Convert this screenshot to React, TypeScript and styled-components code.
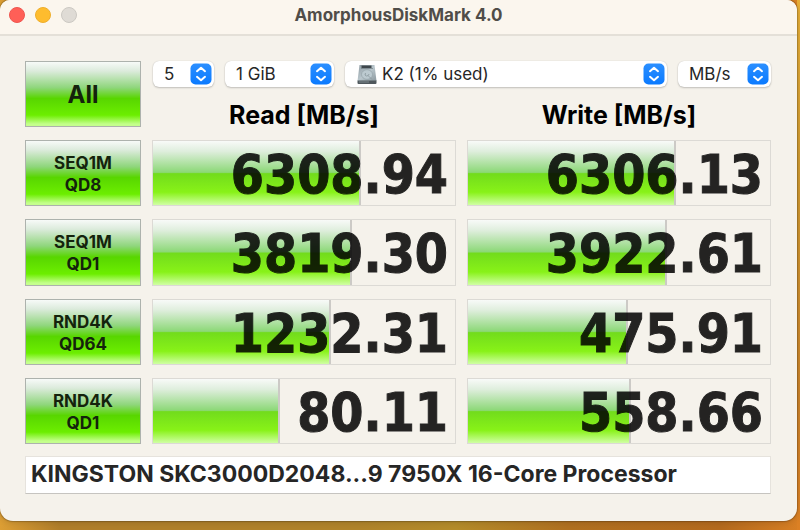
import React from 'react';
import styled, { createGlobalStyle } from 'styled-components';

const GlobalStyle = createGlobalStyle`
  *, *::before, *::after { box-sizing: border-box; }
  body {
    margin: 0;
    font-family: Inter, "Liberation Sans", sans-serif;
    color: #262524;
  }
`;

const Desktop = styled.div`
  display: flex;
  min-height: 100vh;
  padding: 0 3px 9px 0;
  background:
    linear-gradient(#e6ae38 0, #cf9a30 30%, #c9822a 75%, #dc8024 100%) right / 3px 100% no-repeat,
    linear-gradient(90deg, #dc9e34 0, #b07e2a 60px, #b0842a 45%, #b48c2a 57%, #b07020 71%, #b46a1e 90%, #d87f24 100%);
`;

const Window = styled.main`
  flex: 1;
  display: flex;
  flex-direction: column;
  overflow: hidden;
  border-radius: 10px 10px 13px 13px;
  background: #f5f2eb;
  box-shadow: 0 0 1px 1px rgba(0, 0, 0, 0.2), 0 2px 6px rgba(0, 0, 0, 0.12);
`;

const TitleBar = styled.header`
  display: grid;
  grid-template-columns: 1fr auto 1fr;
  align-items: center;
  height: 36px;
  padding: 0 9px 4px;
  border-bottom: 2px solid #e4e0d8;
  background: #fbf6ee;
`;

const Lights = styled.div`
  display: flex;
  gap: 10px;
`;

const Light = styled.button<{ $fill: string; $edge: string }>`
  width: 16px;
  height: 16px;
  padding: 0;
  border: 1px solid ${(p) => p.$edge};
  border-radius: 50%;
  background: ${(p) => p.$fill};
`;

const Title = styled.h1`
  margin: 0;
  font-size: 17px;
  line-height: 20px;
  font-weight: 700;
  color: #504d49;
`;

const Body = styled.div`
  flex: 1;
  display: flex;
  flex-direction: column;
  gap: 12px;
  padding: 25px 26px 27px 25px;
`;

const Board = styled.div`
  flex: 1;
  display: grid;
  grid-template-columns: 116px 1fr 1fr;
  grid-auto-rows: 1fr;
  gap: 13px 11px;
`;

const TestButton = styled.button<{ $large?: boolean }>`
  padding: 2px 0 0;
  border: 1px solid #adb2ad;
  background: linear-gradient(#f7faf8 0%, #dcebdc 14%, #8fd67c 40%, #58d600 57%, #6cee00 83%, #c4ff8c 97%);
  font-family: inherit;
  font-size: ${(p) => (p.$large ? '24px' : '17px')};
  line-height: ${(p) => (p.$large ? '28px' : '22px')};
  font-weight: 700;
  color: #14230c;
`;

const Head = styled.div`
  grid-column: span 2;
  display: flex;
  flex-direction: column;
  justify-content: space-between;
`;

const Pickers = styled.div`
  display: flex;
  gap: 11px;
  padding-left: 1px;
`;

const Picker = styled.label<{ $width?: number }>`
  flex: ${(p) => (p.$width ? `0 0 ${p.$width}px` : '1')};
  display: grid;
  align-items: center;
  height: 26px;
  border-radius: 6px;
  background: #fff;
  box-shadow: 0 0 1px rgba(0, 0, 0, 0.2), 0 1px 2px rgba(0, 0, 0, 0.2);
  & > * { grid-area: 1 / 1; }
`;

const Select = styled.select<{ $inset?: boolean }>`
  appearance: none;
  width: 100%;
  height: 26px;
  padding: 0 28px 0 ${(p) => (p.$inset ? '37px' : '11px')};
  border: 0;
  border-radius: 6px;
  background: transparent;
  font-family: inherit;
  font-size: 17px;
  color: #262626;
`;

const Stepper = styled.svg`
  justify-self: end;
  margin-right: 2px;
  width: 22px;
  height: 22px;
  pointer-events: none;
`;

const Drive = styled.svg`
  margin-left: 12px;
  width: 20px;
  height: 21px;
  pointer-events: none;
`;

const Headings = styled.div`
  display: grid;
  grid-template-columns: 1fr 1fr;
  gap: 11px;
`;

const Heading = styled.h2`
  margin: 0;
  text-align: center;
  font-size: 25px;
  line-height: 24px;
  font-weight: 700;
  color: #000;
`;

const Meter = styled.div`
  display: grid;
  border: 1px solid #dcdad5;
  & > * { grid-area: 1 / 1; }
`;

const Fill = styled.div`
  border-right: 2px solid #cccac6;
  background: linear-gradient(#f8faf8 0%, #dfeedd 16%, #8cd877 49%, #72dc1c 51%, #88f218 80%, #d0ffa4 100%);
`;

const Reading = styled.output`
  align-self: center;
  justify-self: end;
  padding: 4px 7px 0 0;
  font-family: "DejaVu Sans Condensed", "DejaVu Sans", sans-serif;
  font-size: 53px;
  line-height: 56px;
  font-weight: 700;
  color: #000;
  -webkit-text-stroke: 1px #000;
  opacity: 0.85;
`;

const Note = styled.input`
  width: 100%;
  height: 38px;
  padding: 0 5px 2px;
  border: 1px solid #e6e3dd;
  border-bottom-color: #c6c4c0;
  background: #fff;
  font-family: inherit;
  font-size: 23px;
  font-weight: 700;
  color: #262626;
`;

const Arrows = () => (
  <Stepper viewBox="0 0 22 22" aria-hidden="true">
    <defs>
      <linearGradient id="arrowFill" x1="0" y1="0" x2="0" y2="1">
        <stop offset="0" stopColor="#2b8fff" />
        <stop offset="1" stopColor="#0a7aff" />
      </linearGradient>
    </defs>
    <rect x="0.5" y="0.5" width="21" height="21" rx="5" fill="url(#arrowFill)" />
    <path d="M7 8.2 11 4.700l4 3.500M7 13.800l4 3.500 4-3.500" fill="none" stroke="#fff" strokeWidth="2" strokeLinecap="round" strokeLinejoin="round" />
  </Stepper>
);

const DriveIcon = () => (
  <Drive viewBox="0 0 20 21" aria-hidden="true">
    <defs>
      <linearGradient id="driveFill" x1="0" y1="0" x2="1" y2="1">
        <stop offset="0" stopColor="#8f9ba2" />
        <stop offset="0.5" stopColor="#b9c6cc" />
        <stop offset="1" stopColor="#8c999f" />
      </linearGradient>
    </defs>
    <path d="M2.500 1h15L19.500 17H.5z" fill="url(#driveFill)" />
    <path d="M.5 16.500h19v2.500q0 1-1 1h-17q-1 0-1-1z" fill="#4f585d" />
    <path d="M2 18h10" stroke="#7d888e" strokeWidth="1" />
    <path d="M4.500 1.500h10v2.500h-10z" fill="#3e464b" />
    <path d="M4 4.500h12" stroke="#6f7b81" strokeWidth="0.700" />
    <ellipse cx="10" cy="10.500" rx="5.500" ry="4.800" fill="#bccad0" stroke="#94a2a8" strokeWidth="0.700" />
    <path d="M8.500 9q-1.500 2.500 1 3 2.500 0 2.500-2M11.500 12l3.500 3.500" fill="none" stroke="#87959b" strokeWidth="0.800" />
  </Drive>
);

const pickers = [
  { label: 'Test count', value: '5', width: 61 },
  { label: 'Test size', value: '1 GiB', width: 109 },
  { label: 'Target volume', value: 'K2 (1% used)', drive: true },
  { label: 'Unit', value: 'MB/s', width: 93 },
];

const tests = [
  { name: 'SEQ1M', depth: 'QD8', read: '6308.94', readFill: 69, write: '6306.13', writeFill: 69 },
  { name: 'SEQ1M', depth: 'QD1', read: '3819.30', readFill: 66, write: '3922.61', writeFill: 66 },
  { name: 'RND4K', depth: 'QD64', read: '1232.31', readFill: 59, write: '475.91', writeFill: 53 },
  { name: 'RND4K', depth: 'QD1', read: '80.11', readFill: 42, write: '558.66', writeFill: 54 },
];

const Result = ({ label, value, fill }: { label: string; value: string; fill: number }) => (
  <Meter>
    <Fill style={{ width: `${fill}%` }} />
    <Reading aria-label={label}>{value}</Reading>
  </Meter>
);

export default function App() {
  return (
    <>
      <GlobalStyle />
      <Desktop>
        <Window>
          <TitleBar>
            <Lights>
              <Light aria-label="Close" $fill="#ff5f57" $edge="#ee5650" />
              <Light aria-label="Minimize" $fill="#febc2e" $edge="#eeae2c" />
              <Light aria-label="Zoom" $fill="#dfdbd5" $edge="#cbc8c2" />
            </Lights>
            <Title>AmorphousDiskMark 4.0</Title>
          </TitleBar>
          <Body>
            <Board>
              <TestButton $large>All</TestButton>
              <Head>
                <Pickers>
                  {pickers.map((p) => (
                    <Picker key={p.label} $width={p.width}>
                      <Select aria-label={p.label} $inset={p.drive}>
                        <option>{p.value}</option>
                      </Select>
                      {p.drive && <DriveIcon />}
                      <Arrows />
                    </Picker>
                  ))}
                </Pickers>
                <Headings>
                  <Heading>Read [MB/s]</Heading>
                  <Heading>Write [MB/s]</Heading>
                </Headings>
              </Head>
              {tests.map((t) => (
                <React.Fragment key={t.name + t.depth}>
                  <TestButton>
                    {t.name}
                    <br />
                    {t.depth}
                  </TestButton>
                  <Result label={`${t.name} ${t.depth} read`} value={t.read} fill={t.readFill} />
                  <Result label={`${t.name} ${t.depth} write`} value={t.write} fill={t.writeFill} />
                </React.Fragment>
              ))}
            </Board>
            <Note aria-label="Description" defaultValue="KINGSTON SKC3000D2048...9 7950X 16-Core Processor" />
          </Body>
        </Window>
      </Desktop>
    </>
  );
}
